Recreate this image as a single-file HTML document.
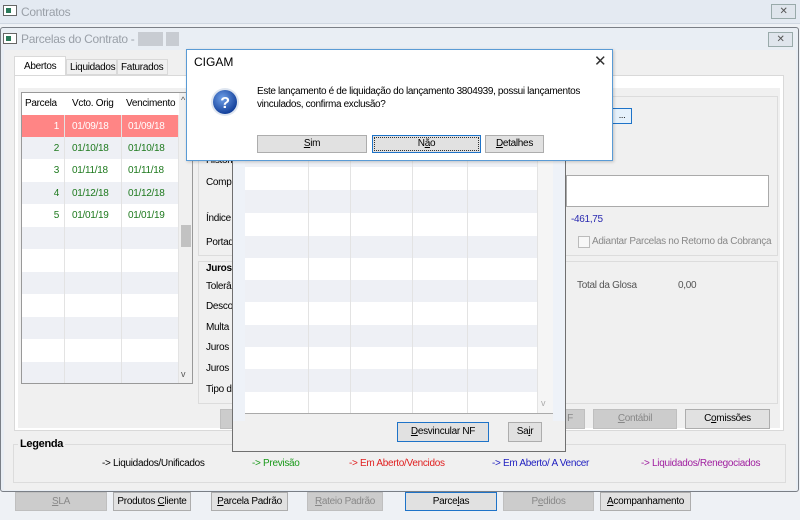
<!DOCTYPE html>
<html><head><meta charset="utf-8"><style>
*{box-sizing:border-box;margin:0;padding:0}
body{width:800px;height:520px;overflow:hidden;background:#eef1f5;font-family:"Liberation Sans",sans-serif;font-size:10px;letter-spacing:-0.3px;color:#000;position:relative;white-space:nowrap}
.a{position:absolute}
.btn{position:absolute;background:#e1e1e1;border:1px solid #adadad;text-align:center;font-size:10px;line-height:17px;color:#000;white-space:nowrap;overflow:hidden}
.dis{background:#ccc;border-color:#bfbfbf;color:#888}
.lbl{position:absolute;font-size:10px;color:#000}
.gc{position:absolute;border-right:1px solid #e3e3e3;top:0;bottom:0}
</style></head><body>
<div class="a" style="left:0;top:0;width:800px;height:24px;background:#e4eaf2;border-bottom:1px solid #d0d8e2"></div>
<div class="a" style="left:3px;top:5px;width:14px;height:11px;border:1px solid #666;background:#fff"><div style="margin:2px;width:5px;height:5px;background:#2a7a5a"></div></div>
<div class="a" style="left:21px;top:5px;font-size:12px;color:#9aa0a8">Contratos</div>
<div class="a" style="left:771px;top:4px;width:25px;height:15px;border:1px solid #9aa;background:#dfe5ec;text-align:center;font-size:10px;color:#555;line-height:13px">✕</div>
<div class="a" style="left:0;top:27px;width:799px;height:465px;background:#e9eef4;border:1px solid #7a7f86;border-radius:3px"></div>
<div class="a" style="left:3px;top:33px;width:14px;height:11px;border:1px solid #666;background:#fff"><div style="margin:2px;width:5px;height:5px;background:#2a7a5a"></div></div>
<div class="a" style="left:21px;top:32px;font-size:12px;color:#9aa0a8">Parcelas do Contrato - <span style="background:#c8ccd2;color:#c8ccd2">1234</span> <span style="background:#c8ccd2;color:#c8ccd2">12</span></div>
<div class="a" style="left:768px;top:32px;width:25px;height:15px;border:1px solid #9aa;background:#dfe5ec;text-align:center;font-size:10px;color:#555;line-height:13px">✕</div>
<div class="a" style="left:4px;top:50px;width:792px;height:440px;background:#f0f0f0"></div>
<div class="a" style="left:14px;top:56px;width:52px;height:20px;background:#fff;border:1px solid #d9d9d9;border-bottom:none;padding:4px 0 0 9px">Abertos</div>
<div class="a" style="left:66px;top:59px;width:51px;height:16px;background:#f0f0f0;border:1px solid #d9d9d9;padding:2px 0 0 3px">Liquidados</div>
<div class="a" style="left:117px;top:59px;width:51px;height:16px;background:#f0f0f0;border:1px solid #d9d9d9;padding:2px 0 0 3px">Faturados</div>
<div class="a" style="left:14px;top:75px;width:770px;height:356px;background:#fff;border:1px solid #d9d9d9"></div>
<div class="a" style="left:18px;top:88px;width:762px;height:340px;background:#f0f0f0"></div>
<div class="a" style="left:21px;top:92px;width:172px;height:292px;background:#fff;border:1px solid #999;overflow:hidden">
 <div class="a" style="left:0;top:0;width:157px;height:22px">
  <span class="a" style="left:3px;top:5px">Parcela</span><span class="a" style="left:50px;top:5px">Vcto. Orig</span><span class="a" style="left:104px;top:5px">Vencimento</span></div>
 <div class="a" style="left:0;top:22px;width:157px;height:22px;background:#ff8585"></div>
 <div class="a" style="left:0;top:44px;width:157px;height:22px;background:#eef0f5"></div>
 <div class="a" style="left:0;top:89px;width:157px;height:22px;background:#eef0f5"></div>
 <div class="a" style="left:0;top:134px;width:157px;height:22px;background:#eef0f5"></div>
 <div class="a" style="left:0;top:179px;width:157px;height:22px;background:#eef0f5"></div>
 <div class="a" style="left:0;top:224px;width:157px;height:22px;background:#eef0f5"></div>
 <div class="a" style="left:0;top:269px;width:157px;height:22px;background:#eef0f5"></div>
 <div class="gc" style="left:0;width:43px;top:22px"></div><div class="gc" style="left:43px;width:57px;top:22px"></div><div class="gc" style="left:100px;width:57px;top:22px"></div>
 <div class="a" style="left:157px;top:0;width:14px;height:292px;background:#f0f0f0"></div>
 <div class="a" style="left:159px;top:132px;width:10px;height:22px;background:#c2c2c2"></div>
 <div class="a" style="left:159px;top:2px;font-size:9px;color:#555">^</div>
 <div class="a" style="left:159px;top:276px;font-size:9px;color:#555">v</div>
 <div class="a" style="left:0;top:28px;width:43px;text-align:right;padding-right:6px;color:#fff">1</div><div class="a" style="left:50px;top:28px;color:#fff">01/09/18</div><div class="a" style="left:106px;top:28px;color:#fff">01/09/18</div>
 <div class="a" style="left:0;top:50px;width:43px;text-align:right;padding-right:6px;color:#1e7a1e">2</div><div class="a" style="left:50px;top:50px;color:#1e7a1e">01/10/18</div><div class="a" style="left:106px;top:50px;color:#1e7a1e">01/10/18</div>
 <div class="a" style="left:0;top:72px;width:43px;text-align:right;padding-right:6px;color:#1e7a1e">3</div><div class="a" style="left:50px;top:72px;color:#1e7a1e">01/11/18</div><div class="a" style="left:106px;top:72px;color:#1e7a1e">01/11/18</div>
 <div class="a" style="left:0;top:95px;width:43px;text-align:right;padding-right:6px;color:#1e7a1e">4</div><div class="a" style="left:50px;top:95px;color:#1e7a1e">01/12/18</div><div class="a" style="left:106px;top:95px;color:#1e7a1e">01/12/18</div>
 <div class="a" style="left:0;top:117px;width:43px;text-align:right;padding-right:6px;color:#1e7a1e">5</div><div class="a" style="left:50px;top:117px;color:#1e7a1e">01/01/19</div><div class="a" style="left:106px;top:117px;color:#1e7a1e">01/01/19</div>
</div>
<div class="a" style="left:198px;top:96px;width:580px;height:160px;border:1px solid #dcdcdc"></div>
<div class="a" style="left:198px;top:261px;width:580px;height:143px;border:1px solid #dcdcdc"></div>
<div class="a" style="left:612px;top:108px;width:20px;height:16px;border:1px solid #1e73c8;background:#e5f1fb;text-align:center;font-size:9px;line-height:12px">...</div>
<div class="lbl" style="left:206px;top:155px">Históri</div>
<div class="lbl" style="left:206px;top:177px">Compl</div>
<div class="lbl" style="left:206px;top:213px">Índice</div>
<div class="lbl" style="left:206px;top:237px">Portad</div>
<div class="lbl" style="left:206px;top:263px;font-weight:bold">Juros</div>
<div class="lbl" style="left:206px;top:281px">Tolerâ</div>
<div class="lbl" style="left:206px;top:301px">Desco</div>
<div class="lbl" style="left:206px;top:322px">Multa</div>
<div class="lbl" style="left:206px;top:342px">Juros</div>
<div class="lbl" style="left:206px;top:363px">Juros</div>
<div class="lbl" style="left:206px;top:384px">Tipo d</div>
<div class="a" style="left:566px;top:175px;width:203px;height:32px;background:#fff;border:1px solid #aaa"></div>
<div class="lbl" style="left:571px;top:214px;color:#2a2ab0">-461,75</div>
<div class="a" style="left:578px;top:236px;width:12px;height:12px;border:1px solid #bbb;background:#f7f7f7"></div>
<div class="lbl" style="left:592px;top:236px;color:#888">Adiantar Parcelas no Retorno da Cobrança</div>
<div class="lbl" style="left:577px;top:280px;color:#555">Total da Glosa</div>
<div class="lbl" style="left:678px;top:280px;color:#555">0,00</div>
<div class="btn dis" style="left:220px;top:409px;width:20px;height:20px"></div>
<div class="btn dis" style="left:555px;top:409px;width:30px;height:20px">F</div>
<div class="btn dis" style="left:593px;top:409px;width:84px;height:20px"><u>C</u>ontábil</div>
<div class="btn" style="left:685px;top:409px;width:85px;height:20px">C<u>o</u>missões</div>
<div class="a" style="left:13px;top:444px;width:773px;height:39px;border:1px solid #dcdcdc"></div>
<div class="a" style="left:18px;top:438px;background:#f0f0f0;padding:0 2px;font-weight:bold;font-size:11px">Legenda</div>
<div class="lbl" style="left:102px;top:458px">-&gt; Liquidados/Unificados</div>
<div class="lbl" style="left:252px;top:458px;color:#1a9a1a">-&gt; Previsão</div>
<div class="lbl" style="left:349px;top:458px;color:#e02020">-&gt; Em Aberto/Vencidos</div>
<div class="lbl" style="left:492px;top:458px;color:#2020c0">-&gt; Em Aberto/ A Vencer</div>
<div class="lbl" style="left:641px;top:458px;color:#a020a0">-&gt; Liquidados/Renegociados</div>
<div class="btn dis" style="left:15px;top:492px;width:92px;height:19px"><u>S</u>LA</div>
<div class="btn" style="left:113px;top:492px;width:78px;height:19px">Produtos <u>C</u>liente</div>
<div class="btn" style="left:211px;top:492px;width:77px;height:19px"><u>P</u>arcela Padrão</div>
<div class="btn dis" style="left:307px;top:492px;width:76px;height:19px"><u>R</u>ateio Padrão</div>
<div class="btn" style="left:405px;top:492px;width:92px;height:19px;border:1px solid #1e73c8">Parce<u>l</u>as</div>
<div class="btn dis" style="left:503px;top:492px;width:91px;height:19px">P<u>e</u>didos</div>
<div class="btn" style="left:600px;top:492px;width:91px;height:19px"><u>A</u>companhamento</div>
<div class="a" style="left:232px;top:120px;width:334px;height:332px;background:#f0f0f0;border:1px solid #707070"></div>
<div class="a" style="left:233px;top:121px;width:12px;height:300px;background:#eef2f8"></div>
<div class="a" style="left:553px;top:121px;width:12px;height:300px;background:#eef2f8"></div>
<div class="a" style="left:245px;top:130px;width:308px;height:284px;background:#fff;border-bottom:1px solid #aaa;overflow:hidden">
 <div class="a" style="left:0;top:15px;width:293px;height:22px;background:#eef0f5"></div>
 <div class="a" style="left:0;top:60px;width:293px;height:23px;background:#eef0f5"></div>
 <div class="a" style="left:0;top:106px;width:293px;height:22px;background:#eef0f5"></div>
 <div class="a" style="left:0;top:150px;width:293px;height:22px;background:#eef0f5"></div>
 <div class="a" style="left:0;top:195px;width:293px;height:22px;background:#eef0f5"></div>
 <div class="a" style="left:0;top:239px;width:293px;height:23px;background:#eef0f5"></div>
 <div class="gc" style="left:0;width:64px"></div><div class="gc" style="left:64px;width:42px"></div><div class="gc" style="left:106px;width:62px"></div><div class="gc" style="left:168px;width:55px"></div><div class="gc" style="left:223px;width:70px"></div>
 <div class="a" style="left:293px;top:0;width:15px;height:284px;background:#f5f5f5"></div>
 <div class="a" style="left:296px;top:268px;font-size:9px;color:#aaa">v</div>
</div>
<div class="btn" style="left:397px;top:422px;width:92px;height:20px;border:1px solid #1e73c8"><u>D</u>esvincular NF</div>
<div class="btn" style="left:508px;top:422px;width:34px;height:20px">Sa<u>i</u>r</div>
<div class="a" style="left:186px;top:49px;width:427px;height:112px;background:#fff;border:1px solid #5a9bd5;box-shadow:1px 1px 3px rgba(0,0,0,.2)"></div>
<div class="a" style="left:194px;top:55px;font-size:12px;letter-spacing:0">CIGAM</div>
<div class="a" style="left:594px;top:52px;font-size:15px;color:#333">✕</div>
<svg class="a" style="left:210px;top:87px" width="30" height="30" viewBox="0 0 30 30"><defs><radialGradient id="g" cx="40%" cy="35%" r="65%"><stop offset="0" stop-color="#6fa0e8"/><stop offset="1" stop-color="#123f9a"/></radialGradient></defs><circle cx="15" cy="15" r="14" fill="#dfe6f0"/><circle cx="15" cy="15" r="12" fill="url(#g)"/><text x="15" y="21" text-anchor="middle" font-family="Liberation Sans" font-weight="bold" font-size="16" fill="#fff">?</text></svg>
<div class="a" style="left:257px;top:85px;font-size:10px;letter-spacing:-0.35px;line-height:13px">Este lançamento é de liquidação do lançamento 3804939, possui lançamentos<br>vinculados, confirma exclusão?</div>
<div class="btn" style="left:257px;top:135px;width:110px;height:18px;line-height:16px"><u>S</u>im</div>
<div class="btn" style="left:372px;top:135px;width:109px;height:18px;line-height:16px;border:1px solid #1e73c8;outline:1px dotted #333;outline-offset:-3px">N<u>ã</u>o</div>
<div class="btn" style="left:485px;top:135px;width:59px;height:18px;line-height:16px"><u>D</u>etalhes</div>
</body></html>
